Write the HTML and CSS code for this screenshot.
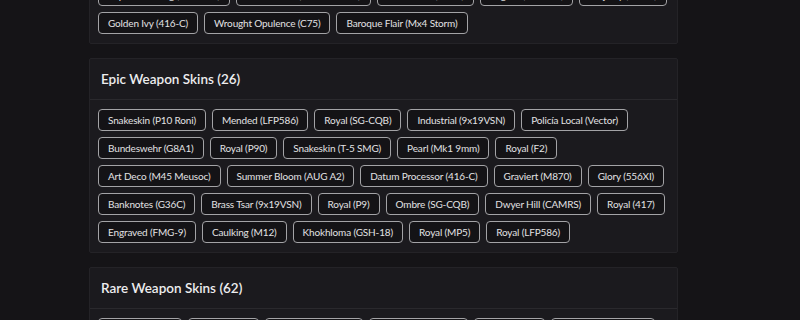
FILE: index.html
```html
<!DOCTYPE html>
<html lang="en">
<head>
    <meta charset="UTF-8">
    <meta name="viewport" content="width=device-width, initial-scale=1.0">
    <title>Weapon Skins</title>
    <link rel="stylesheet" href="styles.css">
</head>
<body>
    <div class="skins-page">

        <section class="skin-card">
            <h2 class="skin-card-title">Legendary Weapon Skins (8)</h2>
            <div class="skin-list">
                <span class="skin-tag">Imperial Gilding (M590A1)</span>
                <span class="skin-tag">Gilded Relic (Commando 9)</span>
                <span class="skin-tag">Gold Scroll (AR33)</span>
                <span class="skin-tag">Regalia (ARX200)</span>
                <span class="skin-tag">Majesty (SR-25)</span>
                <span class="skin-tag">Golden Ivy (416-C)</span>
                <span class="skin-tag">Wrought Opulence (C75)</span>
                <span class="skin-tag">Baroque Flair (Mx4 Storm)</span>
            </div>
        </section>

        <section class="skin-card">
            <h2 class="skin-card-title">Epic Weapon Skins (26)</h2>
            <div class="skin-list">
                <span class="skin-tag">Snakeskin (P10 Roni)</span>
                <span class="skin-tag">Mended (LFP586)</span>
                <span class="skin-tag">Royal (SG-CQB)</span>
                <span class="skin-tag">Industrial (9x19VSN)</span>
                <span class="skin-tag">Policía Local (Vector)</span>
                <span class="skin-tag">Bundeswehr (G8A1)</span>
                <span class="skin-tag">Royal (P90)</span>
                <span class="skin-tag">Snakeskin (T-5 SMG)</span>
                <span class="skin-tag">Pearl (Mk1 9mm)</span>
                <span class="skin-tag">Royal (F2)</span>
                <span class="skin-tag">Art Deco (M45 Meusoc)</span>
                <span class="skin-tag">Summer Bloom (AUG A2)</span>
                <span class="skin-tag">Datum Processor (416-C)</span>
                <span class="skin-tag">Graviert (M870)</span>
                <span class="skin-tag">Glory (556XI)</span>
                <span class="skin-tag">Banknotes (G36C)</span>
                <span class="skin-tag">Brass Tsar (9x19VSN)</span>
                <span class="skin-tag">Royal (P9)</span>
                <span class="skin-tag">Ombre (SG-CQB)</span>
                <span class="skin-tag">Dwyer Hill (CAMRS)</span>
                <span class="skin-tag">Royal (417)</span>
                <span class="skin-tag">Engraved (FMG-9)</span>
                <span class="skin-tag">Caulking (M12)</span>
                <span class="skin-tag">Khokhloma (GSH-18)</span>
                <span class="skin-tag">Royal (MP5)</span>
                <span class="skin-tag">Royal (LFP586)</span>
            </div>
        </section>

        <section class="skin-card">
            <h2 class="skin-card-title">Rare Weapon Skins (62)</h2>
            <div class="skin-list">
                <span class="skin-tag">Cobalt (L85A2)</span>
                <span class="skin-tag">Jade (AR33)</span>
                <span class="skin-tag">Serpent (SPAS-12)</span>
                <span class="skin-tag">Crimson (C8-SFW)</span>
                <span class="skin-tag">Onyx (MP7)</span>
                <span class="skin-tag">Tiger Stripe (AK-12)</span>
                <span class="skin-tag">Marble (T-95 LSW)</span>
                <span class="skin-tag">Ivory (SMG-11)</span>
                <span class="skin-tag">Ember (OTs-03)</span>
            </div>
        </section>

    </div>
</body>
</html>
```
FILE: styles.css
```css
:root {
    --sk-bg-page: #151417;
    --sk-bg-card: #1b1a1e;
    --sk-bg-tag: #141316;
    --sk-border-card: #242327;
    --sk-border-divider: #2a292d;
    --sk-border-tag: #a3a3a6;
    --sk-text-primary: #ededee;
    --sk-text-tag: #e2e2e4;
}

body {
    font-family: 'Lato', 'Open Sans', Arial, sans-serif;
    background-color: var(--sk-bg-page);
    color: var(--sk-text-primary);
    margin: 0;
    overflow: hidden;
}

.skins-page {
    width: 589px;
    margin: -67px 0 0 89px;
    display: flex;
    flex-direction: column;
    gap: 14px;
}

.skin-card {
    background-color: var(--sk-bg-card);
    border: 1px solid var(--sk-border-card);
    border-radius: 2px;
}

.skin-card-title {
    margin: 0;
    padding: 12px 11px;
    font-size: 13.5px;
    line-height: 16px;
    font-weight: 600;
    border-bottom: 1px solid var(--sk-border-divider);
}

.skin-list {
    display: flex;
    flex-wrap: wrap;
    gap: 6px;
    padding: 9px 8px;
}

.skin-tag {
    display: inline-block;
    padding: 4px 9px;
    font-size: 10px;
    line-height: 12px;
    letter-spacing: -0.15px;
    color: var(--sk-text-tag);
    background-color: var(--sk-bg-tag);
    border: 1px solid var(--sk-border-tag);
    border-radius: 4px;
    white-space: nowrap;
}
```
